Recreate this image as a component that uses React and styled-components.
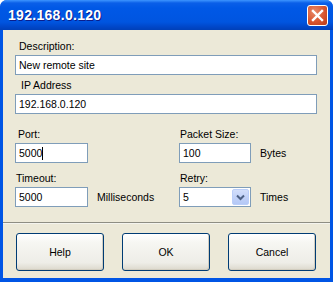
import React from 'react'
import styled, { createGlobalStyle } from 'styled-components'

const GlobalStyle = createGlobalStyle`
  html, body {
    margin: 0;
    padding: 0;
    background: #ffffff;
  }
  * {
    box-sizing: border-box;
  }
`

const Window = styled.div`
  width: 333px;
  height: 282px;
  display: flex;
  flex-direction: column;
  background: #0055e5;
  border-radius: 7px 7px 0 0;
  overflow: hidden;
  font-family: "Liberation Sans", Arial, sans-serif;
  font-size: 10.5px;
  color: #000;
`

const TitleBar = styled.div`
  height: 30px;
  flex: none;
  display: flex;
  align-items: center;
  justify-content: space-between;
  padding: 0 5px 0 8px;
  background: linear-gradient(
    180deg,
    #3d95ff 0px,
    #0a5fe8 3px,
    #0058e6 8px,
    #0055e0 22px,
    #0046c8 27px,
    #0040b8 30px
  );
`

const Title = styled.span`
  color: #ffffff;
  font-weight: bold;
  font-size: 14px;
  letter-spacing: 0.3px;
  text-shadow: 1px 1px 0 #0a1e8c;
`

const CloseButton = styled.div`
  width: 21px;
  height: 21px;
  border: 1px solid #ffffff;
  border-radius: 3px;
  background: radial-gradient(circle at 35% 30%, #e88a6a 0%, #d8552f 55%, #b93a17 100%);
  display: flex;
  align-items: center;
  justify-content: center;
`

const Client = styled.div`
  flex: 1;
  margin: 0 3px 4px 3px;
  background: #ece9d8;
  display: flex;
  flex-direction: column;
`

const Form = styled.div`
  padding: 10px 13px 0 12px;
  display: flex;
  flex-direction: column;
`

const Field = styled.div`
  display: flex;
  flex-direction: column;
  gap: 2px;
  margin-top: ${p => p.$top || 0}px;
`

const Label = styled.div`
  height: 13px;
  line-height: 13px;
  padding-left: ${p => p.$indent || 0}px;
  white-space: nowrap;
`

const TextBox = styled.div`
  width: ${p => (p.$width ? `${p.$width}px` : '100%')};
  height: 20px;
  border: 1px solid #7f9db9;
  background: #ffffff;
  padding: 0 3px;
  display: flex;
  align-items: center;
  white-space: nowrap;
  position: relative;
`

const Caret = styled.span`
  display: inline-block;
  width: 1px;
  height: 13px;
  background: #000;
`

const DropButton = styled.div`
  position: absolute;
  right: 1px;
  top: 1px;
  width: 17px;
  height: 16px;
  border-radius: 2px;
  background: linear-gradient(180deg, #d2defb 0%, #c2d2f8 50%, #b4c8f6 100%);
  border: 1px solid #bacef9;
  display: flex;
  align-items: center;
  justify-content: center;
`

const Grid = styled.div`
  display: grid;
  grid-template-columns: 164px 1fr;
  row-gap: 9px;
  margin-top: 14px;
`

const InputRow = styled.div`
  display: flex;
  align-items: center;
  gap: 9px;
`

const Separator = styled.div`
  margin-top: 15px;
  height: 2px;
  border-top: 1px solid #8e8e83;
  border-bottom: 1px solid #f4f4ee;
`

const Footer = styled.div`
  flex: 1;
  display: flex;
  gap: 18px;
  padding: 9px 14px 7px 13px;
`

const Button = styled.div`
  width: 88px;
  height: 38px;
  border: 1px solid #003c74;
  border-radius: 3px;
  background: linear-gradient(180deg, #ffffff 0%, #f6f6f2 25%, #eeede7 80%, #dcd8cc 100%);
  display: flex;
  align-items: center;
  justify-content: center;
  box-shadow: inset -1px -1px 0 #d2cdbf;
`

export default function App() {
  return (
    <>
      <GlobalStyle />
      <Window>
        <TitleBar>
          <Title>192.168.0.120</Title>
          <CloseButton>
            <svg width="13" height="13" viewBox="0 0 13 13">
              <path d="M2 2 L11 11 M11 2 L2 11" stroke="#ffffff" strokeWidth="2.4" strokeLinecap="square" />
            </svg>
          </CloseButton>
        </TitleBar>
        <Client>
          <Form>
            <Field>
              <Label $indent={4}>Description:</Label>
              <TextBox>New remote site</TextBox>
            </Field>
            <Field $top={4}>
              <Label $indent={6}>IP Address</Label>
              <TextBox>192.168.0.120</TextBox>
            </Field>
            <Grid>
              <Field>
                <Label $indent={3}>Port:</Label>
                <TextBox $width={73}>
                  5000<Caret />
                </TextBox>
              </Field>
              <Field>
                <Label $indent={1}>Packet Size:</Label>
                <InputRow>
                  <TextBox $width={72}>100</TextBox>
                  <span>Bytes</span>
                </InputRow>
              </Field>
              <Field>
                <Label $indent={1}>Timeout:</Label>
                <InputRow>
                  <TextBox $width={73}>5000</TextBox>
                  <span>Milliseconds</span>
                </InputRow>
              </Field>
              <Field>
                <Label $indent={1}>Retry:</Label>
                <InputRow>
                  <TextBox $width={72}>
                    5
                    <DropButton>
                      <svg width="9" height="7" viewBox="0 0 9 7">
                        <path d="M1 1.5 L4.5 5 L8 1.5" stroke="#4d6185" strokeWidth="2" fill="none" />
                      </svg>
                    </DropButton>
                  </TextBox>
                  <span>Times</span>
                </InputRow>
              </Field>
            </Grid>
          </Form>
          <Separator />
          <Footer>
            <Button>Help</Button>
            <Button>OK</Button>
            <Button>Cancel</Button>
          </Footer>
        </Client>
      </Window>
    </>
  )
}
